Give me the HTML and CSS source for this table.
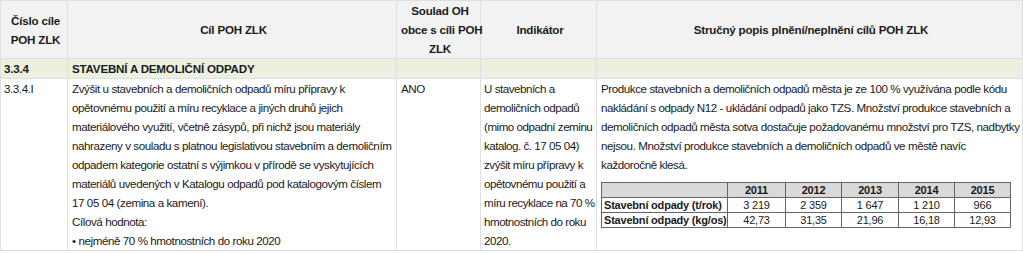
FILE: index.html
```html
<!DOCTYPE html>
<html lang="cs">
<head>
<meta charset="utf-8">
<link rel="stylesheet" href="styles.css">
</head>
<body>
<table class="poh">
  <colgroup>
    <col class="c1"><col class="c2"><col class="c3"><col class="c4"><col class="c5">
  </colgroup>
  <thead>
    <tr class="head">
      <th>Číslo cíle<br>POH ZLK</th>
      <th>Cíl POH ZLK</th>
      <th class="nw">Soulad OH<br>obce s cíli POH<br>ZLK</th>
      <th>Indikátor</th>
      <th>Stručný popis plnění/neplnění cílů POH ZLK</th>
    </tr>
  </thead>
  <tbody>
    <tr class="section">
      <td>3.3.4</td>
      <td>STAVEBNÍ A DEMOLIČNÍ ODPADY</td>
      <td></td><td></td><td></td>
    </tr>
    <tr class="data">
      <td>3.3.4.I</td>
      <td>Zvýšit u stavebních a demoličních odpadů míru přípravy k opětovnému použití a míru recyklace a jiných druhů jejich materiálového využití, včetně zásypů, při nichž jsou materiály nahrazeny v souladu s platnou legislativou stavebním a demoličním odpadem kategorie ostatní s výjimkou v přírodě se vyskytujících materiálů uvedených v Katalogu odpadů pod katalogovým číslem 17 05 04 (zemina a kamení).<br>Cílová hodnota:<br>• nejméně 70 % hmotnostních do roku 2020</td>
      <td>ANO</td>
      <td class="ind">U stavebních a demoličních odpadů (mimo odpadní zeminu katalog. č. 17 05 04) zvýšit míru přípravy k opětovnému použití a míru recyklace na 70 % hmotnostních do roku 2020.</td>
      <td>
        <p class="desc">Produkce stavebních a demoličních odpadů města je ze 100 % využívána podle kódu nakládání s odpady N12 - ukládání odpadů jako TZS. Množství produkce stavebních a demoličních odpadů města sotva dostačuje požadovanému množství pro TZS, nadbytky nejsou. Množství produkce stavebních a demoličních odpadů ve městě navíc každoročně klesá.</p>
        <table class="stats">
          <colgroup><col class="lab"><col class="y1"><col class="y2"><col class="y3"><col class="y4"><col class="y5"></colgroup>
          <tr class="yrs"><th></th><th>2011</th><th>2012</th><th>2013</th><th>2014</th><th>2015</th></tr>
          <tr><th>Stavební odpady (t/rok)</th><td>3 219</td><td>2 359</td><td>1 647</td><td>1 210</td><td>966</td></tr>
          <tr><th>Stavební odpady (kg/os)</th><td>42,73</td><td>31,35</td><td>21,96</td><td>16,18</td><td>12,93</td></tr>
        </table>
      </td>
    </tr>
  </tbody>
</table>
</body>
</html>
```

FILE: styles.css
```css
html, body {
  margin: 0;
  padding: 0;
  background: #ffffff;
}
body {
  font-family: "Liberation Sans", Arial, sans-serif;
  font-size: 11.6px;
  letter-spacing: -0.42px;
  color: #1a1a1a;
}
.poh {
  border-collapse: collapse;
  table-layout: fixed;
  width: 1022px;
}
.c1 { width: 67px; }
.c2 { width: 329px; }
.c3 { width: 84px; }
.c4 { width: 116px; }
.c5 { width: 426px; }
.poh > thead > tr > th,
.poh > tbody > tr > td {
  border: 1px solid #dcdfe3;
  padding: 0 1px 0 4px;
  line-height: 19px;
}
.head th {
  background: #f2f2f2;
  font-weight: bold;
  text-align: center;
  vertical-align: middle;
  height: 56px;
  padding: 0 1px;
  letter-spacing: -0.2px;
}
.head th.nw { white-space: nowrap; }
.section td {
  background: #ebf1de;
  font-weight: bold;
  height: 18px;
  letter-spacing: -0.2px;
}
.poh .section td:first-child,
.poh .data td:first-child { padding-left: 3px; }
.data td {
  vertical-align: top;
}
.poh .data td.ind {
  padding-left: 3px;
  padding-right: 0;
  letter-spacing: -0.48px;
}
.desc {
  margin: 0 0 8px;
}
.stats {
  border-collapse: collapse;
  table-layout: fixed;
  border: 1.5px solid #333;
  width: 409px;
  font-size: 11px;
  letter-spacing: -0.2px;
  line-height: 14px;
}
.stats .lab { width: 126px; }
.stats .y1 { width: 58px; }
.stats .y2 { width: 56px; }
.stats .y3 { width: 57px; }
.stats .y4 { width: 56px; }
.stats .y5 { width: 56px; }
.stats th, .stats td {
  border: 1px solid #666;
  padding: 0 2px;
  text-align: center;
}
.stats tr:not(.yrs) th {
  text-align: left;
  white-space: nowrap;
}
.stats .yrs th {
  background: #d9d9d9;
}
.stats td { font-weight: normal; }
```
